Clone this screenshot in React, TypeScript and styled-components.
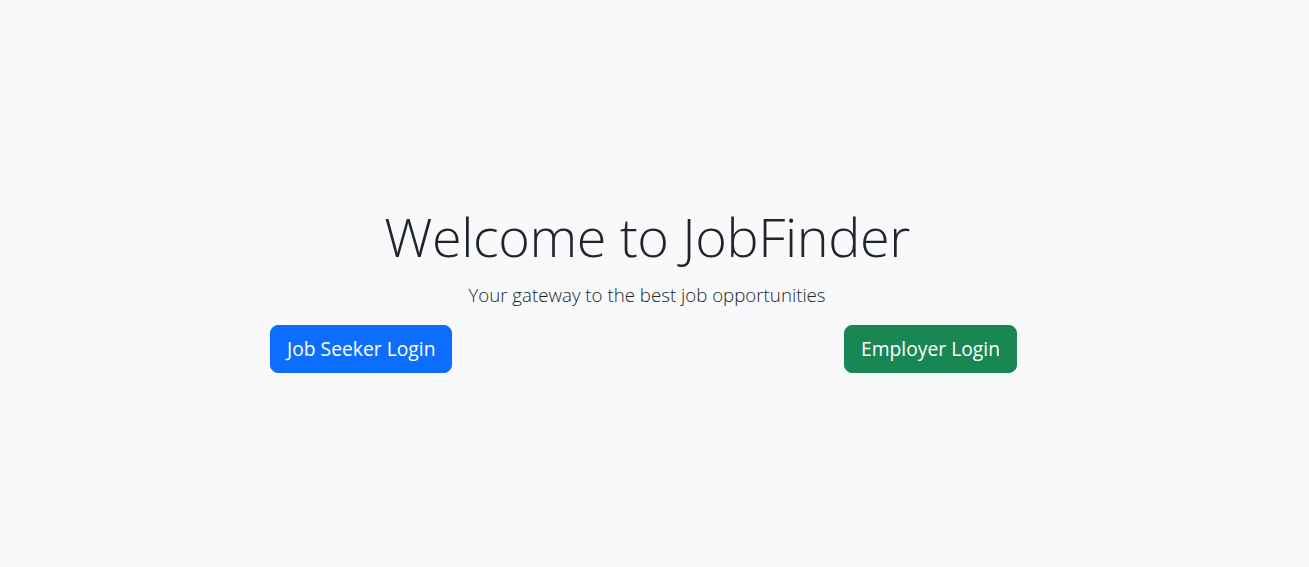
import React from 'react';
import styled, { createGlobalStyle } from 'styled-components';

const GlobalStyle = createGlobalStyle`
  * { box-sizing: border-box; }
  body {
    margin: 0;
    background-color: #f8f9fa;
    color: #212529;
    font-family: "Open Sans", "Noto Sans", sans-serif;
  }
`;

const Page = styled.main`
  min-height: 567px;
  display: flex;
  align-items: center;
  justify-content: center;
  padding: 10px 22px 0 0;
`;

const Hero = styled.section`
  width: 747px;
  text-align: center;
`;

const Title = styled.h1`
  font-size: 54px;
  font-weight: 300;
  line-height: 1.2;
  margin: 0 0 12px;
  padding-left: 7px;
  color: #212529;
  letter-spacing: -0.4px;
`;

const Lead = styled.p`
  font-size: 18.7px;
  font-weight: 300;
  line-height: 1.5;
  margin: 0 0 16px;
  padding-left: 7px;
  color: #212529;
`;

const Actions = styled.div`
  display: flex;
  justify-content: space-between;
`;

const LoginButton = styled.button<{ $tone: string }>`
  font-family: inherit;
  font-size: 19.3px;
  line-height: 30px;
  padding: 8px 16px;
  border: 1px solid ${(p) => p.$tone};
  border-radius: 8px;
  background-color: ${(p) => p.$tone};
  color: #fff;
  cursor: pointer;
`;

export default function App() {
  return (
    <>
      <GlobalStyle />
      <Page>
        <Hero>
          <Title>Welcome to JobFinder</Title>
          <Lead>Your gateway to the best job opportunities</Lead>
          <Actions>
            <LoginButton $tone="#0d6efd">Job Seeker Login</LoginButton>
            <LoginButton $tone="#198754">Employer Login</LoginButton>
          </Actions>
        </Hero>
      </Page>
    </>
  );
}
